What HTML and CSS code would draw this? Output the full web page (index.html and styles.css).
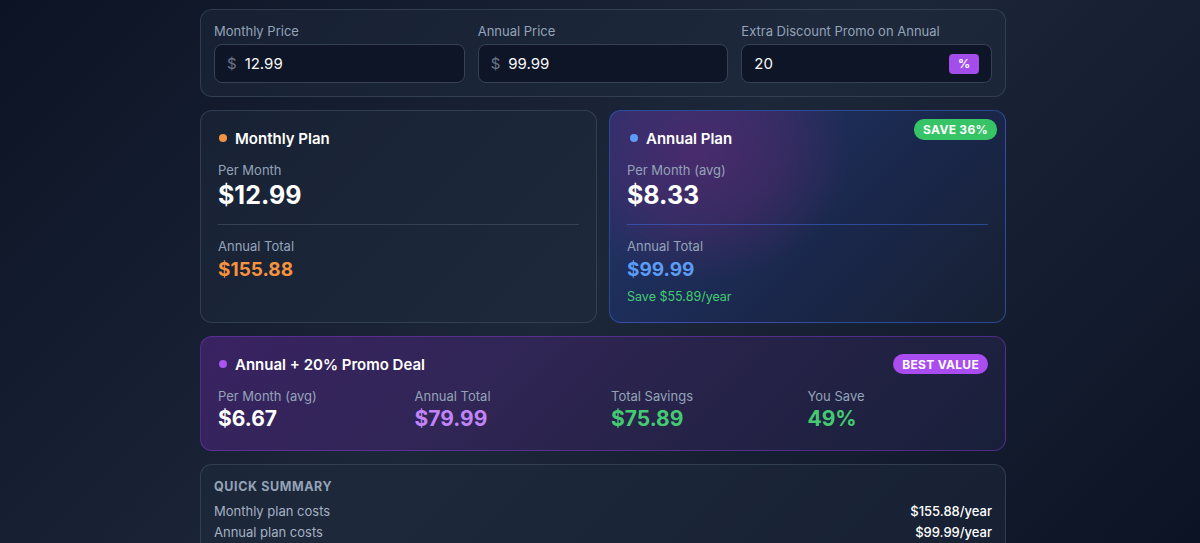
FILE: index.html
```html
<!DOCTYPE html>
<html lang="en">
<head>
<meta charset="utf-8">
<title>Pricing Calculator</title>
<link rel="stylesheet" href="styles.css">
</head>
<body>
<main class="wrap">
  <div class="container">
    <section class="card inputs">
      <div class="field">
        <label class="label">Monthly Price</label>
        <div class="input"><span class="prefix">$</span><span class="val">12.99</span></div>
      </div>
      <div class="field">
        <label class="label">Annual Price</label>
        <div class="input"><span class="prefix">$</span><span class="val">99.99</span></div>
      </div>
      <div class="field">
        <label class="label">Extra Discount Promo on Annual</label>
        <div class="input"><span class="val">20</span><span class="suffix">%</span></div>
      </div>
    </section>

    <section class="plans">
      <div class="card plan">
        <div class="plan-head"><span class="dot dot-orange"></span><span class="plan-title">Monthly Plan</span></div>
        <div class="stat-label">Per Month</div>
        <div class="big">$12.99</div>
        <div class="divider"></div>
        <div class="stat-label">Annual Total</div>
        <div class="mid orange">$155.88</div>
      </div>
      <div class="card plan annual">
        <span class="badge badge-green">SAVE 36%</span>
        <div class="plan-head"><span class="dot dot-blue"></span><span class="plan-title">Annual Plan</span></div>
        <div class="stat-label">Per Month (avg)</div>
        <div class="big">$8.33</div>
        <div class="divider divider-blue"></div>
        <div class="stat-label">Annual Total</div>
        <div class="mid blue">$99.99</div>
        <div class="save">Save $55.89/year</div>
      </div>
    </section>

    <section class="card promo">
      <div class="promo-head">
        <div class="plan-head"><span class="dot dot-purple"></span><span class="plan-title">Annual + 20% Promo Deal</span></div>
        <span class="badge badge-purple">BEST VALUE</span>
      </div>
      <div class="promo-grid">
        <div><div class="stat-label">Per Month (avg)</div><div class="pval">$6.67</div></div>
        <div><div class="stat-label">Annual Total</div><div class="pval pval-purple">$79.99</div></div>
        <div><div class="stat-label">Total Savings</div><div class="pval pval-green">$75.89</div></div>
        <div><div class="stat-label">You Save</div><div class="pval pval-green">49%</div></div>
      </div>
    </section>

    <section class="card summary">
      <h3 class="sum-title">QUICK SUMMARY</h3>
      <div class="sum-row"><span>Monthly plan costs</span><span class="sum-val">$155.88/year</span></div>
      <div class="sum-row"><span>Annual plan costs</span><span class="sum-val">$99.99/year</span></div>
    </section>
  </div>
</main>
</body>
</html>
```

FILE: styles.css
```css
* { box-sizing: border-box; }
html {
  background: linear-gradient(135deg, #0c1325 0%, #1d273a 50%, #0c1325 100%) fixed;
  min-height: 100%;
}
body {
  margin: 0;
  font-family: Inter, "Noto Sans", "Liberation Sans", sans-serif;
  color: #f1f5f9;
}
.wrap {
  padding: 9px 0 30px 6px;
}
.container {
  width: 806px;
  margin: 0 auto;
  display: flex;
  flex-direction: column;
  gap: 13px;
}
.card {
  position: relative;
  border: 1px solid rgba(71, 85, 105, 0.55);
  border-radius: 12px;
  background: rgba(30, 41, 59, 0.5);
}
.inputs {
  padding: 13px;
  display: grid;
  grid-template-columns: 1fr 1fr 1fr;
  gap: 13px;
}
.field { display: flex; flex-direction: column; gap: 5px; }
.label {
  font-size: 13px;
  line-height: 16px;
  color: #94a3b8;
}
.input {
  height: 39px;
  border: 1px solid #364257;
  border-radius: 8px;
  background: #0e1526;
  display: flex;
  align-items: center;
  padding: 0 12px 0 12px;
  font-size: 15px;
}
.prefix { color: #6b7789; margin-right: 8px; }
.val { color: #f8fafc; flex: 1; }
.suffix {
  background: #a34ded;
  color: #fff;
  font-weight: 700;
  font-size: 12px;
  border-radius: 4px;
  width: 30px;
  height: 20px;
  display: flex;
  align-items: center;
  justify-content: center;
}
.plans {
  display: grid;
  grid-template-columns: 1fr 1fr;
  gap: 12px;
}
.plan {
  padding: 17px;
}
.annual {
  border-color: rgba(59, 110, 230, 0.5);
  background:
    radial-gradient(ellipse 150px 130px at 90px 40px, rgba(115, 38, 120, 0.5) 0%, rgba(115, 38, 120, 0.3) 55%, rgba(115, 38, 120, 0) 100%),
    linear-gradient(135deg, rgba(37, 70, 170, 0.45) 0%, rgba(30, 50, 120, 0.32) 60%, rgba(30, 41, 59, 0.3) 100%);
}
.plan-head {
  display: flex;
  align-items: center;
  gap: 8px;
  height: 20px;
  padding-left: 1px;
}
.annual .plan-head { padding-left: 3px; }
.dot {
  width: 8px;
  height: 8px;
  border-radius: 50%;
  flex: none;
}
.dot-orange { background: #f59342; }
.dot-blue { background: #5b9cf7; }
.dot-purple { background: #a955f2; }
.plan-title {
  font-size: 15px;
  font-weight: 600;
  color: #fff;
}
.stat-label {
  margin-top: 14px;
  font-size: 13px;
  line-height: 16px;
  color: #94a3b8;
}
.big {
  margin-top: 2px;
  font-size: 25px;
  line-height: 30px;
  font-weight: 700;
  color: #fff;
}
.divider {
  height: 1px;
  background: rgba(71, 85, 105, 0.6);
  margin: 14px 0 0;
}
.divider-blue { background: rgba(59, 110, 230, 0.5); }
.stat-label + .mid { margin-top: 4px; }
.divider + .stat-label { margin-top: 13px; }
.mid {
  font-size: 19px;
  line-height: 24px;
  font-weight: 700;
}
.orange { color: #f7923f; }
.blue { color: #5c9cf5; }
.save {
  margin-top: 7px;
  font-size: 12.5px;
  line-height: 16px;
  color: #44cb72;
}
.badge {
  display: inline-flex;
  align-items: center;
  height: 20px;
  padding: 0 9px;
  border-radius: 10px;
  color: #fff;
  font-size: 12px;
  font-weight: 700;
  letter-spacing: 0.3px;
}
.badge-green {
  position: absolute;
  top: 8px;
  right: 8px;
  height: 21px;
  background: #36c466;
}
.badge-purple { background: #a94df0; }
.promo {
  padding: 17px 17px 18px;
  border-color: rgba(140, 60, 220, 0.45);
  background: linear-gradient(135deg, rgba(110, 40, 170, 0.4) 0%, rgba(80, 35, 130, 0.3) 50%, rgba(40, 45, 85, 0.35) 100%);
}
.promo-head {
  display: flex;
  justify-content: space-between;
  align-items: center;
}
.promo-grid {
  display: grid;
  grid-template-columns: repeat(4, 1fr);
  gap: 16px;
}
.promo-grid .stat-label { margin-top: 14px; }
.pval {
  margin-top: 2px;
  font-size: 21px;
  line-height: 26px;
  font-weight: 700;
  color: #fff;
}
.pval-purple { color: #c184f8; }
.pval-green { color: #44cb72; }
.summary {
  padding: 13px;
}
.sum-title {
  margin: 1px 0 0;
  font-size: 12.5px;
  line-height: 16px;
  font-weight: 700;
  letter-spacing: 0.6px;
  color: #94a3b8;
}
.sum-row {
  display: flex;
  justify-content: space-between;
  font-size: 13px;
  line-height: 21px;
  color: #a5b1c2;
}
.sum-title + .sum-row { margin-top: 6px; }
.sum-val { color: #fff; font-weight: 500; }
```
